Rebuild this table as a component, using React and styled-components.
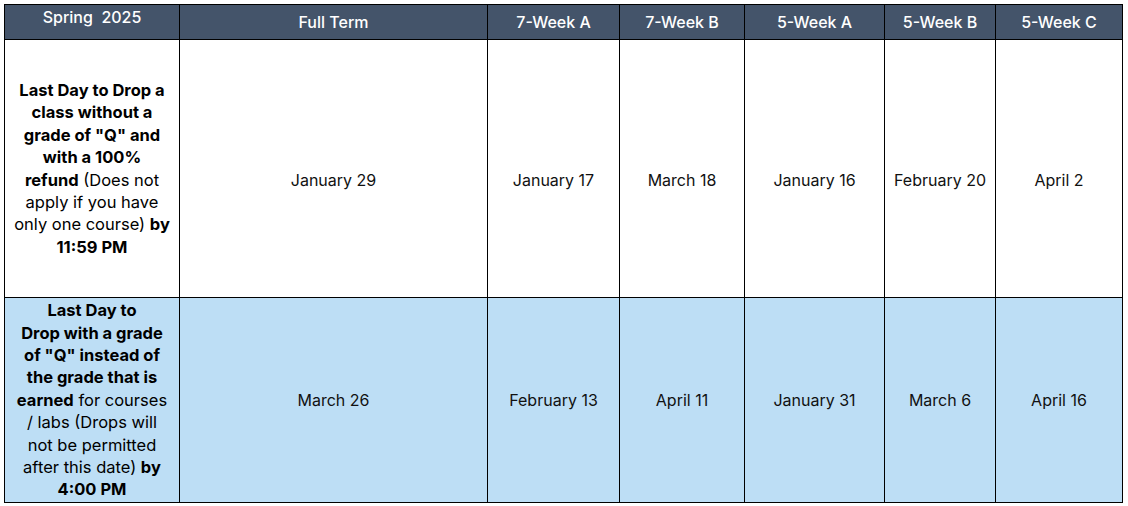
import React from 'react';
import styled, { createGlobalStyle } from 'styled-components';

const GlobalStyle = createGlobalStyle`
  body {
    margin: 0;
    background: #fff;
    font-family: Inter, "Open Sans", sans-serif;
  }
`;

const Page = styled.div`
  padding: 4px 6px 4px 4px;
`;

const Table = styled.table`
  border-collapse: collapse;
  table-layout: fixed;
  width: 1118px;
  border: 1.5px solid #000;
`;

const HeadCell = styled.th`
  background: #44546a;
  color: #fff;
  font-weight: 500;
  font-size: 16px;
  height: 32px;
  padding: 0;
  border: 1px solid #000;
  text-align: center;
  vertical-align: ${p => (p.$top ? 'top' : 'middle')};
  padding-top: ${p => (p.$top ? '2px' : '0')};
  white-space: pre;
`;

const Row = styled.tr`
  background: ${p => (p.$shade ? '#bddef5' : '#fff')};
  height: ${p => p.$h}px;
`;

const LabelCell = styled.td`
  border: 1px solid #000;
  padding: 0 2px;
  text-align: center;
  font-size: 16.5px;
  line-height: 22.4px;
  color: #000;
  white-space: nowrap;
`;

const DateCell = styled.td`
  border: 1px solid #000;
  text-align: center;
  font-size: 16px;
  color: #111;
  padding: ${p => p.$shift}px 0 0;
`;

const cols = [175, 308, 132, 125, 140, 111, 127];
const headers = ['Full Term', '7-Week A', '7-Week B', '5-Week A', '5-Week B', '5-Week C'];

const rows = [
  {
    h: 258,
    shift: 22,
    label: (
      <>
        <b>Last Day to Drop a</b>
        <br />
        <b>class without a</b>
        <br />
        <b>grade of "Q" and</b>
        <br />
        <b>with a 100%</b>
        <br />
        <b>refund</b> (Does not
        <br />
        apply if you have
        <br />
        only one course) <b>by</b>
        <br />
        <b>11:59 PM</b>
      </>
    ),
    dates: ['January 29', 'January 17', 'March 18', 'January 16', 'February 20', 'April 2'],
  },
  {
    h: 205,
    shift: 0,
    shade: true,
    label: (
      <>
        <b>Last Day to</b>
        <br />
        <b>Drop with a grade</b>
        <br />
        <b>of "Q" instead of</b>
        <br />
        <b>the grade that is</b>
        <br />
        <b>earned</b> for courses
        <br />
        / labs (Drops will
        <br />
        not be permitted
        <br />
        after this date) <b>by</b>
        <br />
        <b>4:00 PM</b>
      </>
    ),
    dates: ['March 26', 'February 13', 'April 11', 'January 31', 'March 6', 'April 16'],
  },
];

const App = () => (
  <Page>
    <GlobalStyle />
    <Table>
      <colgroup>
        {cols.map((w, i) => (
          <col key={i} style={{ width: w }} />
        ))}
      </colgroup>
      <thead>
        <tr>
          <HeadCell $top>{'Spring  2025'}</HeadCell>
          {headers.map(h => (
            <HeadCell key={h}>{h}</HeadCell>
          ))}
        </tr>
      </thead>
      <tbody>
        {rows.map((r, i) => (
          <Row key={i} $h={r.h} $shade={r.shade}>
            <LabelCell>{r.label}</LabelCell>
            {r.dates.map((d, j) => (
              <DateCell key={j} $shift={r.shift}>
                {d}
              </DateCell>
            ))}
          </Row>
        ))}
      </tbody>
    </Table>
  </Page>
);

export default App;
